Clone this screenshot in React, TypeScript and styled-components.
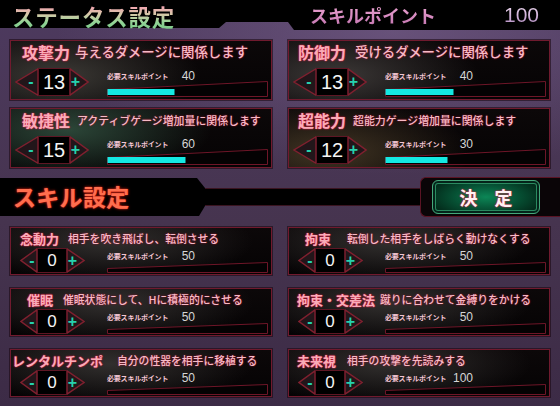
import React from 'react';
import styled, { createGlobalStyle } from 'styled-components';

const Global = createGlobalStyle`
  html, body { margin: 0; padding: 0; }
  body {
    width: 560px; height: 406px; overflow: hidden; background: #3e2f4c;
    font-family: "Noto Sans CJK JP", "Noto Sans", sans-serif;
  }
`;

const Screen = styled.div`
  width: 560px; height: 406px; overflow: hidden;
  display: flex; flex-direction: column;
  background:
    radial-gradient(ellipse 60% 35% at 70% 8%, rgba(130, 105, 150, 0.5) 0%, rgba(0,0,0,0) 100%),
    linear-gradient(180deg, #4d3a5f 0%, #46344f 55%, #3c2b46 100%);
`;

const TopBar = styled.div`
  height: 30px; flex: none;
  display: flex; align-items: flex-start;
`;

const TitleSeg = styled.div`
  width: 219px; height: 28px; background: #000;
  display: flex; align-items: flex-start;
`;

const NotchSeg = styled.div`
  width: 82px; height: 30px; background: #000;
  clip-path: polygon(0 0, 100% 0, 100% 100%, 75px 100%, 69px 22px, 7px 22px, 0 28px);
`;

const PointsSeg = styled.div`
  flex: 1; height: 30px; background: #000;
  display: flex; align-items: flex-start; justify-content: space-between;
  padding: 3px 21px 0 9px; box-sizing: border-box;
`;

const MainTitle = styled.h1`
  margin: 0; padding: 0 0 0 12px; flex: none;
  font-size: 22.5px; line-height: 32px; height: 32px; font-weight: 700; letter-spacing: 0.8px;
  background: linear-gradient(180deg, #f0a6b0 0%, #f0a6b0 22%, #d6c8a8 45%, #92d496 70%, #74c484 100%);
  -webkit-background-clip: text; background-clip: text; color: transparent;
  white-space: nowrap;
`;

const PointsHeaderLabel = styled.span`
  font-size: 18px; line-height: 24px; font-weight: 700;
  background: linear-gradient(180deg, #f0a8d4 0%, #c274b0 100%);
  -webkit-background-clip: text; background-clip: text; color: transparent;
`;

const PointsHeaderValue = styled.span`
  font-family: "Liberation Sans", Arial, sans-serif;
  font-size: 21px; line-height: 24px;
  background: linear-gradient(180deg, #f4e0f4 0%, #b088c0 100%);
  -webkit-background-clip: text; background-clip: text; color: transparent;
`;

const StatusGrid = styled.div`
  margin-top: 10px; padding: 0 10px;
  display: grid; grid-template-columns: 262px 262px; column-gap: 16px; row-gap: 8px;
`;

const SkillGrid = styled.div`
  margin-top: 10px; padding: 0 10px;
  display: grid; grid-template-columns: 262px 262px; column-gap: 16px; row-gap: 13px;
`;

const Card = styled.div<{ $h: number; $glow: string; $gx: number; $gy: number }>`
  height: ${p => p.$h}px; box-sizing: border-box;
  border: 1px solid #701a2e;
  background:
    radial-gradient(ellipse 55% 90% at ${p => p.$gx}% ${p => p.$gy}%, ${p => p.$glow} 0%, rgba(0,0,0,0) 100%),
    linear-gradient(180deg, #0c0809 0%, #050304 100%);
  box-shadow: 0 0 0 1px rgba(24, 6, 14, 0.55);
  display: flex; flex-direction: column;
`;

const TitleRow = styled.div<{ $h: number; $pl: number }>`
  height: ${p => p.$h}px; margin-top: 1px; padding-left: ${p => p.$pl}px;
  display: flex; align-items: center; white-space: nowrap;
`;

const Name = styled.span<{ $size: number }>`
  font-size: ${p => p.$size}px; line-height: 1; font-weight: 700;
  color: #f8acb8;
  text-shadow: 0 0 2px #d0143a, 0 0 1px #ff3a5a;
`;

const Desc = styled.span<{ $size: number; $gap: number }>`
  margin-left: ${p => p.$gap}px;
  font-size: ${p => p.$size}px; line-height: 1; font-weight: 500;
  color: #f6bac6;
  text-shadow: 0 0 2px #a8102c;
`;

const BodyRow = styled.div<{ $mt: number }>`
  margin-top: ${p => p.$mt}px;
  display: grid; grid-template-columns: 96px 161px; align-items: start;
`;

const Stepper = styled.div<{ $h: number; $ml: number }>`
  height: ${p => p.$h}px; margin-left: ${p => p.$ml}px;
  display: flex; align-items: stretch;
`;

const Arrow = styled.div<{ $w: number; $side: 'left' | 'right' }>`
  width: ${p => p.$w}px; position: relative;
  display: flex; align-items: center; justify-content: center;
  padding-${p => (p.$side === 'left' ? 'left' : 'right')}: ${p => Math.round(p.$w * 0.4)}px;
  box-sizing: border-box;
  svg { position: absolute; inset: 0; width: 100%; height: 100%; }
`;

const Sign = styled.span`
  position: relative;
  font-family: "Liberation Sans", Arial, sans-serif;
  font-size: 16px; font-weight: 700; line-height: 1;
  color: #26d2ae;
`;

const ValueBox = styled.div<{ $w: number; $size: number }>`
  width: ${p => p.$w}px; box-sizing: border-box;
  background: #000; border: 1px solid #5e1624;
  display: flex; align-items: center; justify-content: center;
  font-family: "Liberation Sans", Arial, sans-serif;
  font-size: ${p => p.$size}px; color: #f4f4f4;
`;

const PointsBox = styled.div`
  padding-top: 3px;
  display: flex; flex-direction: column;
`;

const PointsLine = styled.div`
  width: 88px; height: 10px;
  display: flex; align-items: center; justify-content: space-between;
`;

const PointsLabel = styled.span`
  font-size: 7px; font-weight: 700; line-height: 1; letter-spacing: -0.2px;
  color: #f4c6d4;
`;

const PointsValue = styled.span`
  font-family: "Liberation Sans", Arial, sans-serif;
  font-size: 12px; line-height: 1; color: #d6d6d6;
`;

const BarSvg = styled.svg<{ $mt: number }>`
  display: block; margin-top: ${p => p.$mt}px;
`;

const SkillHeader = styled.div`
  margin-top: 9px; height: 40px;
  display: flex; align-items: center;
`;

const SkillTitleBlock = styled.div`
  width: 205px; height: 38px; background: #000;
  clip-path: polygon(0 0, 197px 0, 205px 10px, 205px 28px, 199px 38px, 0 38px);
  display: flex; align-items: center;
`;

const SkillTitle = styled.h2`
  margin: 0; padding: 0 0 2px 13px;
  font-size: 23px; line-height: 1; font-weight: 700; letter-spacing: 0.3px;
  color: #ff6e4e;
  text-shadow: 0 0 3px #d01e10, 0 0 1px #ff3020;
`;

const Connector = styled.div`
  flex: 1; height: 16px; background: #000;
  border-top: 1px solid #3a1420; border-bottom: 1px solid #3a1420;
`;

const ButtonFrame = styled.div`
  width: 140px; height: 40px; box-sizing: border-box;
  background: #0a0507;
  border: 1px solid #5a1424; border-right: none;
  border-radius: 6px 0 0 6px;
  display: flex; align-items: center; padding-left: 11px;
`;

const DecideButton = styled.button`
  width: 108px; height: 34px; box-sizing: border-box;
  border: 1px solid #44a87a; border-radius: 6px;
  box-shadow: inset 0 0 0 2px #04241a, inset 0 0 0 3px #2a8a60;
  background: radial-gradient(ellipse 55% 70% at 50% 50%, #0c8656 0%, #075a3a 45%, #032a1a 100%);
  font-family: "Noto Sans CJK JP", sans-serif;
  font-size: 18px; font-weight: 700; letter-spacing: 17px; text-indent: 17px;
  color: #fff2f4;
  text-shadow: 0 0 2px #e0204a, 0 0 1px #ff3050;
  padding: 0; cursor: pointer;
`;

type StepperProps = { h: number; ml: number; lw: number; bw: number; rw: number; value: number; size: number };

function ValueStepper({ h, ml, lw, bw, rw, value, size }: StepperProps) {
  return (
    <Stepper $h={h} $ml={ml}>
      <Arrow $w={lw} $side="left">
        <svg viewBox={`0 0 ${lw} ${h}`} preserveAspectRatio="none">
          <polygon points={`${lw},0.8 1,${h / 2} ${lw},${h - 0.8}`} fill="#22161a" stroke="#80202f" strokeWidth="1.4" />
        </svg>
        <Sign>-</Sign>
      </Arrow>
      <ValueBox $w={bw} $size={size}>{value}</ValueBox>
      <Arrow $w={rw} $side="right">
        <svg viewBox={`0 0 ${rw} ${h}`} preserveAspectRatio="none">
          <polygon points={`0,0.8 ${rw - 1},${h / 2} 0,${h - 0.8}`} fill="#22161a" stroke="#80202f" strokeWidth="1.4" />
        </svg>
        <Sign>+</Sign>
      </Arrow>
    </Stepper>
  );
}

function CostBar({ h, slope, fill, mt }: { h: number; slope: number; fill: number; mt: number }) {
  const w = 161;
  return (
    <BarSvg $mt={mt} width={w} height={h} viewBox={`0 0 ${w} ${h}`}>
      <polygon points={`0.5,${slope + 0.5} ${w - 0.5},0.5 ${w - 0.5},${h - 0.5} 0.5,${h - 0.5}`} fill="#040203" stroke="#6e1628" strokeWidth="1" />
      {fill > 0 && <rect x="0.5" y={slope} width={fill} height={h - slope - 2} fill="#14e8e2" />}
    </BarSvg>
  );
}

type Stat = { name: string; desc: string; descSize: number; pl: number; gap: number; value: number; cost: number; fill: number; glow: string; gx: number; gy: number };

const stats: Stat[] = [
  { name: '攻撃力', desc: '与えるダメージに関係します', descSize: 13.4, pl: 11, gap: 5, value: 13, cost: 40, fill: 67, glow: 'rgba(78, 76, 70, 0.75)', gx: 18, gy: 60 },
  { name: '防御力', desc: '受けるダメージに関係します', descSize: 13.4, pl: 9, gap: 9, value: 13, cost: 40, fill: 68, glow: 'rgba(78, 74, 72, 0.75)', gx: 18, gy: 60 },
  { name: '敏捷性', desc: 'アクティブゲージ増加量に関係します', descSize: 10.9, pl: 11, gap: 7, value: 15, cost: 60, fill: 78, glow: 'rgba(52, 86, 68, 0.8)', gx: 22, gy: 35 },
  { name: '超能力', desc: '超能力ゲージ増加量に関係します', descSize: 10.9, pl: 9, gap: 7, value: 12, cost: 30, fill: 62, glow: 'rgba(86, 70, 46, 0.75)', gx: 15, gy: 75 },
];

type Skill = { name: string; desc: string; pl: number; gap: number; cost: number };

const skills: Skill[] = [
  { name: '念動力', desc: '相手を吹き飛ばし、転倒させる', pl: 9, gap: 9, cost: 50 },
  { name: '拘束', desc: '転倒した相手をしばらく動けなくする', pl: 16, gap: 16, cost: 50 },
  { name: '催眠', desc: '催眠状態にして、Hに積極的にさせる', pl: 16, gap: 10, cost: 50 },
  { name: '拘束・交差法', desc: '蹴りに合わせて金縛りをかける', pl: 8, gap: 5, cost: 50 },
  { name: 'レンタルチンポ', desc: '自分の性器を相手に移植する', pl: 1, gap: 14, cost: 50 },
  { name: '未来視', desc: '相手の攻撃を先読みする', pl: 8, gap: 11, cost: 100 },
];

export default function App() {
  return (
    <Screen>
      <Global />
      <TopBar>
        <TitleSeg>
          <MainTitle>ステータス設定</MainTitle>
        </TitleSeg>
        <NotchSeg />
        <PointsSeg>
          <PointsHeaderLabel>スキルポイント</PointsHeaderLabel>
          <PointsHeaderValue>100</PointsHeaderValue>
        </PointsSeg>
      </TopBar>

      <StatusGrid>
        {stats.map(s => (
          <Card key={s.name} $h={60} $glow={s.glow} $gx={s.gx} $gy={s.gy}>
            <TitleRow $h={20} $pl={s.pl}>
              <Name $size={16}>{s.name}</Name>
              <Desc $size={s.descSize} $gap={s.gap}>{s.desc}</Desc>
            </TitleRow>
            <BodyRow $mt={6}>
              <ValueStepper h={28} ml={4} lw={23} bw={32} rw={19} value={s.value} size={20} />
              <PointsBox>
                <PointsLine>
                  <PointsLabel>必要スキルポイント</PointsLabel>
                  <PointsValue>{s.cost}</PointsValue>
                </PointsLine>
                <CostBar h={16} slope={8} fill={s.fill} mt={0} />
              </PointsBox>
            </BodyRow>
          </Card>
        ))}
      </StatusGrid>

      <SkillHeader>
        <SkillTitleBlock>
          <SkillTitle>スキル設定</SkillTitle>
        </SkillTitleBlock>
        <Connector />
        <ButtonFrame>
          <DecideButton type="button">決定</DecideButton>
        </ButtonFrame>
      </SkillHeader>

      <SkillGrid>
        {skills.map(s => (
          <Card key={s.name} $h={48} $glow="rgba(66, 64, 62, 0.7)" $gx={38} $gy={30}>
            <TitleRow $h={18} $pl={s.pl}>
              <Name $size={13}>{s.name}</Name>
              <Desc $size={10.8} $gap={s.gap}>{s.desc}</Desc>
            </TitleRow>
            <BodyRow $mt={1}>
              <ValueStepper h={25} ml={9} lw={17} bw={30} rw={18} value={0} size={17} />
              <PointsBox>
                <PointsLine>
                  <PointsLabel>必要スキルポイント</PointsLabel>
                  <PointsValue>{s.cost}</PointsValue>
                </PointsLine>
                <CostBar h={11} slope={6} fill={0} mt={1} />
              </PointsBox>
            </BodyRow>
          </Card>
        ))}
      </SkillGrid>
    </Screen>
  );
}
